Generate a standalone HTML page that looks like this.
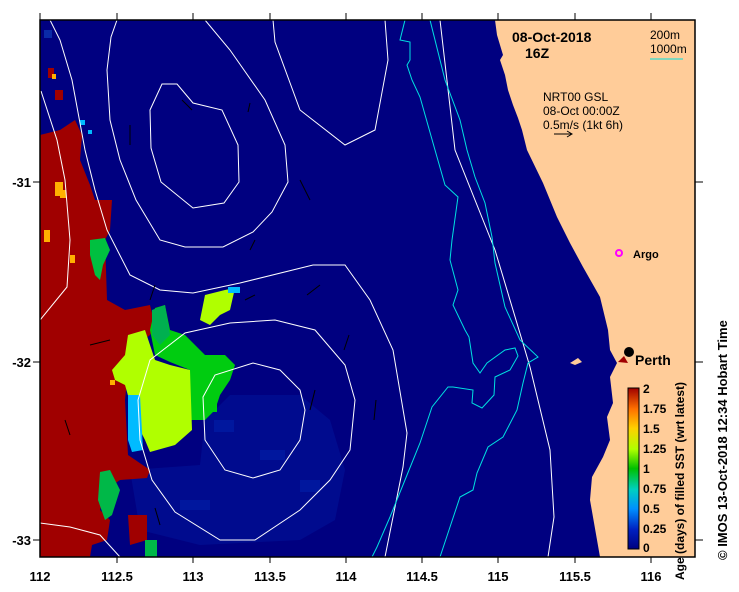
<!DOCTYPE html>
<html><head><meta charset="utf-8"><style>
html,body{margin:0;padding:0;background:#fff;}
svg{display:block;font-family:"Liberation Sans",sans-serif;}
</style></head><body>
<svg width="739" height="592" viewBox="0 0 739 592" xmlns="http://www.w3.org/2000/svg">
<defs>
<clipPath id="c"><rect x="40" y="20" width="655" height="537"/></clipPath>
<linearGradient id="cb" x1="0" y1="1" x2="0" y2="0">
<stop offset="0" stop-color="#000080"/>
<stop offset="0.12" stop-color="#0020c0"/>
<stop offset="0.25" stop-color="#0090ff"/>
<stop offset="0.37" stop-color="#00d0c0"/>
<stop offset="0.5" stop-color="#00c000"/>
<stop offset="0.62" stop-color="#b0ff00"/>
<stop offset="0.75" stop-color="#ffd000"/>
<stop offset="0.87" stop-color="#ff7000"/>
<stop offset="1" stop-color="#a00000"/>
</linearGradient>
</defs>
<g clip-path="url(#c)">
<rect x="40" y="20" width="655" height="537" fill="#000080"/>
<!-- lighter navy patches -->
<path d="M130,470 L200,465 L205,420 L230,395 L300,395 L330,420 L345,470 L335,520 L300,540 L200,545 L140,530 Z" fill="#0018a0" opacity="0.45"/>
<rect x="214" y="420" width="20" height="12" fill="#0020a8" opacity="0.6"/>
<rect x="260" y="450" width="25" height="10" fill="#0020a8" opacity="0.6"/>
<rect x="300" y="480" width="20" height="12" fill="#0020a8" opacity="0.6"/>
<rect x="180" y="500" width="30" height="10" fill="#0020a8" opacity="0.6"/>
<rect x="44" y="30" width="8" height="8" fill="#0a2aa8"/>
<!-- land -->
<path d="M495,20 L497,35 L503,55 L500,60 L505,75 L508,90 L513,105 L518,118 L522,130 L527,150 L543,183 L557,217 L570,243 L583,267 L600,297 L608,330 L610,350 L617,363 L610,377 L613,403 L607,417 L610,440 L603,457 L592,477 L590,500 L600,557 L700,557 L700,20 Z" fill="#ffcc99"/>
<path d="M570,363 L578,358 L582,362 L575,365 Z" fill="#ffcc99"/>
<!-- red -->
<path d="M40,135 L60,130 L75,120 L82,135 L80,160 L90,185 L95,200 L112,200 L110,230 L105,240 L107,300 L125,310 L150,305 L155,325 L150,335 L130,350 L125,400 L128,455 L150,470 L147,478 L120,480 L105,490 L100,510 L110,520 L107,540 L92,545 L90,557 L40,557 Z" fill="#a00000"/>
<path d="M128,515 L147,515 L147,540 L130,545 Z" fill="#a00000"/>
<rect x="55" y="90" width="8" height="10" fill="#a00000"/>
<rect x="48" y="68" width="6" height="10" fill="#a00000"/>
<rect x="52" y="74" width="4" height="5" fill="#ffb000"/>
<rect x="110" y="380" width="5" height="5" fill="#ffb000"/>
<rect x="70" y="255" width="5" height="8" fill="#ffb000"/>
<rect x="55" y="182" width="8" height="14" fill="#ffb000"/>
<rect x="60" y="190" width="6" height="8" fill="#ffb000"/>
<rect x="44" y="230" width="6" height="12" fill="#ffb000"/>
<rect x="80" y="120" width="5" height="5" fill="#00bbff"/>
<rect x="88" y="130" width="4" height="4" fill="#00bbff"/>
<!-- green / yellow -->
<path d="M90,240 L105,238 L110,250 L103,265 L100,280 L95,275 L90,255Z" fill="#00c040"/>
<path d="M100,472 L110,470 L120,490 L112,515 L105,520 L98,500Z" fill="#00b848"/>
<rect x="145" y="540" width="12" height="17" fill="#00b848"/>
<path d="M155,308 L165,305 L170,330 L185,335 L195,345 L205,355 L225,355 L235,365 L230,380 L220,395 L215,410 L205,420 L190,420 L190,370 L170,362 L155,355 L150,330Z" fill="#00cc10"/>
<path d="M152,310 L165,305 L170,335 L160,345 L152,335Z" fill="#00b050"/>
<path d="M128,335 L145,330 L150,345 L155,360 L170,365 L190,370 L192,430 L175,445 L150,452 L145,440 L135,420 L125,385 L115,380 L112,370 L125,355Z" fill="#b0ff00"/>
<path d="M205,295 L225,290 L235,288 L230,310 L220,315 L210,325 L200,320Z" fill="#b0ff00"/>
<rect x="228" y="287" width="12" height="6" fill="#00bbff"/>
<path d="M128,395 L140,395 L143,450 L132,452 L128,440Z" fill="#00bbff"/>
<rect x="205" y="400" width="12" height="12" fill="#00cc10"/>
<!-- white contours -->
<g fill="none" stroke="#fff" stroke-width="1">
<path d="M162,84 L177,84 L193,103 L222,110 L238,145 L239,182 L224,203 L193,208 L161,182 L151,148 L150,110 Z"/>
<path d="M117,20 L111,37 L107,70 L110,120 L120,160 L136,200 L160,240 L185,247 L223,247 L253,232 L272,212 L288,182 L285,145 L265,100 L230,50 L205,20"/>
<path d="M273,20 L275,42 L300,110 L345,145 L375,130 L388,60 L385,20"/>
<path d="M50,20 L60,40 L72,80 L85,150 L95,190 L107,230 L130,275 L160,290 L193,293 L240,283 L313,265 L345,265 L370,300 L393,350 L407,433 L403,467 L385,557"/>
<path d="M41,91 L57,140 L65,180 L70,240 L67,287 L40,320"/>
<path d="M150,360 L185,333 L230,323 L275,320 L315,330 L345,365 L355,400 L350,450 L330,480 L300,510 L255,540 L220,540 L175,512 L152,480 L140,440 L138,400 Z"/>
<path d="M203,397 L215,375 L253,363 L280,370 L300,390 L305,410 L300,440 L280,470 L253,478 L225,470 L205,440 Z"/>
<path d="M40,523 L70,527 L100,535 L120,557"/>
<path d="M440,20 L455,150 L495,250 L522,340 L530,367 L550,450 L554,517 L548,557"/>
</g>
<!-- cyan isobaths -->
<g fill="none" stroke="#00e0e0" stroke-width="1">
<path d="M405,20 L400,40 L410,42 L410,60 L407,65 L412,80 L420,97 L435,150 L445,185 L458,197 L452,240 L450,260 L458,290 L453,305 L465,330 L469,337 L473,363 L480,373 L487,363 L505,350 L515,348 L518,356 L510,370 L495,377 L494,395 L482,408 L472,403 L473,390 L453,387 L448,387 L432,407 L420,443 L405,480 L390,517 L377,547 L372,557"/>
<path d="M430,20 L445,80 L460,120 L467,150 L475,177 L485,203 L492,237 L495,263 L505,307 L520,340 L538,357 L528,363 L523,383 L517,410 L503,437 L488,447 L477,473 L473,490 L460,497 L450,527 L440,557"/>
</g>
<!-- wind arrows -->
<g stroke="#000" stroke-width="1">
<line x1="130" y1="145" x2="130" y2="125"/><line x1="192" y1="110" x2="182" y2="100"/>
<line x1="110" y1="340" x2="90" y2="345"/><line x1="150" y1="300" x2="155" y2="285"/>
<line x1="307" y1="295" x2="320" y2="285"/><line x1="248" y1="112" x2="250" y2="103"/>
<line x1="310" y1="200" x2="300" y2="180"/><line x1="250" y1="250" x2="255" y2="240"/>
<line x1="344" y1="350" x2="349" y2="335"/><line x1="374" y1="420" x2="376" y2="400"/>
<line x1="310" y1="410" x2="315" y2="390"/><line x1="160" y1="525" x2="155" y2="508"/>
<line x1="70" y1="435" x2="65" y2="420"/><line x1="245" y1="300" x2="255" y2="295"/>
</g>
<circle cx="619" cy="253" r="3" fill="none" stroke="#ff00ff" stroke-width="2"/>
<circle cx="629" cy="352" r="5" fill="#000"/>
<path d="M618,362 L624,356 L628,363 Z" fill="#a00000"/>
</g>
<rect x="40" y="20" width="655" height="537" fill="none" stroke="#000" stroke-width="1.5"/>
<!-- ticks -->
<g stroke="#000" stroke-width="1">
<line x1="40" y1="13" x2="40" y2="20"/><line x1="117" y1="13" x2="117" y2="20"/><line x1="193" y1="13" x2="193" y2="20"/><line x1="270" y1="13" x2="270" y2="20"/><line x1="346" y1="13" x2="346" y2="20"/><line x1="422" y1="13" x2="422" y2="20"/><line x1="498" y1="13" x2="498" y2="20"/><line x1="575" y1="13" x2="575" y2="20"/><line x1="651" y1="13" x2="651" y2="20"/>
<line x1="117" y1="557" x2="117" y2="563"/><line x1="193" y1="557" x2="193" y2="563"/><line x1="270" y1="557" x2="270" y2="563"/><line x1="346" y1="557" x2="346" y2="563"/><line x1="422" y1="557" x2="422" y2="563"/><line x1="498" y1="557" x2="498" y2="563"/><line x1="575" y1="557" x2="575" y2="563"/><line x1="651" y1="557" x2="651" y2="563"/>
<line x1="33" y1="182" x2="40" y2="182"/><line x1="33" y1="362" x2="40" y2="362"/><line x1="33" y1="540" x2="40" y2="540"/>
<line x1="695" y1="182" x2="703" y2="182"/><line x1="695" y1="362" x2="703" y2="362"/><line x1="695" y1="540" x2="703" y2="540"/>
</g>
<g font-size="13" font-weight="bold" fill="#000">
<text x="31" y="187" text-anchor="end">-31</text>
<text x="31" y="367" text-anchor="end">-32</text>
<text x="31" y="545" text-anchor="end">-33</text>
<g text-anchor="middle">
<text x="40" y="581">112</text><text x="117" y="581">112.5</text><text x="193" y="581">113</text><text x="270" y="581">113.5</text><text x="346" y="581">114</text><text x="422" y="581">114.5</text><text x="498" y="581">115</text><text x="575" y="581">115.5</text><text x="651" y="581">116</text>
</g>
</g>
<g fill="#000">
<text x="512" y="42" font-size="14" font-weight="bold">08-Oct-2018</text>
<text x="525" y="58" font-size="14" font-weight="bold">16Z</text>
<text x="650" y="39" font-size="12">200m</text>
<text x="650" y="53" font-size="12">1000m</text>
<line x1="650" y1="59" x2="683" y2="59" stroke="#00e0e0"/>
<text x="543" y="101" font-size="12">NRT00 GSL</text>
<text x="543" y="115" font-size="12">08-Oct 00:00Z</text>
<text x="543" y="129" font-size="12">0.5m/s (1kt 6h)</text>
<line x1="554" y1="134" x2="571" y2="134" stroke="#000"/>
<path d="M567,131 L572,134 L567,137" fill="none" stroke="#000"/>
<text x="633" y="258" font-size="11" font-weight="bold">Argo</text>
<text x="635" y="365" font-size="14" font-weight="bold">Perth</text>
</g>
<rect x="628" y="388" width="11" height="161" fill="url(#cb)" stroke="#000" stroke-width="1"/>
<g font-size="12" font-weight="bold" fill="#000">
<text x="643" y="393">2</text><text x="643" y="413">1.75</text><text x="643" y="433">1.5</text><text x="643" y="453">1.25</text><text x="643" y="473">1</text><text x="643" y="493">0.75</text><text x="643" y="513">0.5</text><text x="643" y="533">0.25</text><text x="643" y="552">0</text>
</g>
<text transform="translate(684,580) rotate(-90)" font-size="12" font-weight="bold">Age (days) of filled SST (wrt latest)</text>
<text transform="translate(727,560) rotate(-90)" font-size="13" font-weight="bold">© IMOS 13-Oct-2018 12:34 Hobart Time</text>
</svg>
</body></html>
